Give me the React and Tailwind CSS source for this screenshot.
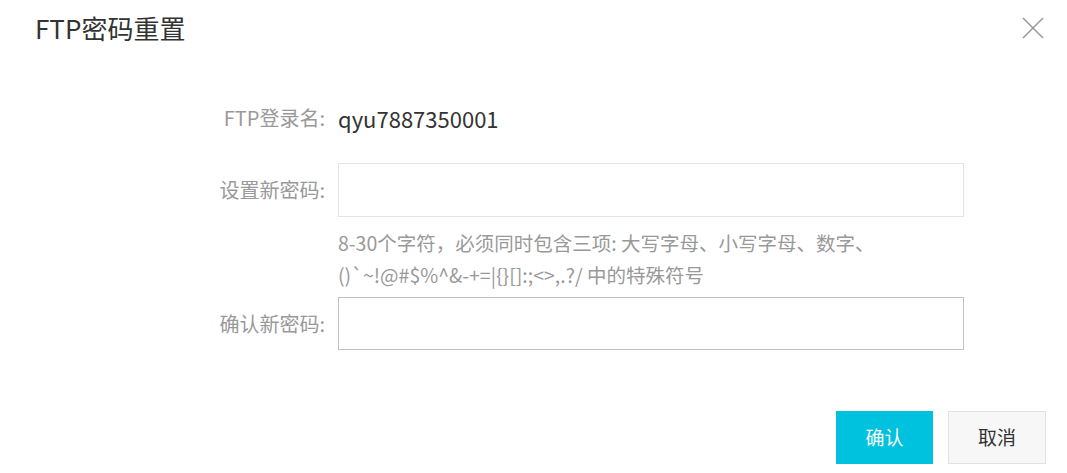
import React from 'react';

const font = { fontFamily: '"Noto Sans CJK SC", "Noto Sans", sans-serif' };

const Label = ({ children }) => (
  <div className="w-[303px] shrink-0 text-right text-[20px] text-[#999] pr-[13px]">{children}</div>
);

const App = () => {
  return (
    <div
      className="w-[1067px] h-[473px] bg-white overflow-hidden font-['Noto_Sans_CJK_SC','Noto_Sans',sans-serif]"
      style={font}
    >
      {/* Header */}
      <div className="flex items-center justify-between h-[56px] pl-[35px] pr-[23px]">
        <h2 className="text-[26px] text-[#333] leading-none">FTP密码重置</h2>
        <button className="w-[22px] h-[22px] flex items-center justify-center">
          <svg width="22" height="22" viewBox="0 0 22 22" fill="none" stroke="#9a9a9a" strokeWidth="1.6">
            <line x1="1" y1="1" x2="21" y2="21" />
            <line x1="21" y1="1" x2="1" y2="21" />
          </svg>
        </button>
      </div>

      {/* Form */}
      <div className="pl-[35px] mt-[42px]">
        <div className="flex items-center h-[40px]">
          <Label>FTP登录名:</Label>
          <span className="text-[22px] text-[#333]">qyu7887350001</span>
        </div>

        <div className="flex items-center mt-[25px]">
          <Label>设置新密码:</Label>
          <input type="password" className="w-[626px] h-[54px] border border-[#e4e4e4] outline-none px-3" />
        </div>

        <div className="ml-[303px] mt-[10px] text-[19.5px] leading-[32px] text-[#999]">
          <div>8-30个字符，必须同时包含三项: 大写字母、小写字母、数字、</div>
          <div>()`~!@#$%^&amp;-+=|{'{}'}[]:;&lt;&gt;,.?/ 中的特殊符号</div>
        </div>

        <div className="flex items-center mt-[6px]">
          <Label>确认新密码:</Label>
          <input type="password" className="w-[626px] h-[53px] border border-[#c2c2c2] outline-none px-3" />
        </div>
      </div>

      {/* Footer */}
      <div className="flex justify-end gap-[15px] pr-[21px] mt-[61px]">
        <button className="w-[97px] h-[53px] bg-[#00c1de] text-white text-[19px]">确认</button>
        <button className="w-[98px] h-[53px] bg-[#f7f7f7] border border-[#e2e2e2] text-[#333] text-[19px]">取消</button>
      </div>
    </div>
  );
};

export default App;
